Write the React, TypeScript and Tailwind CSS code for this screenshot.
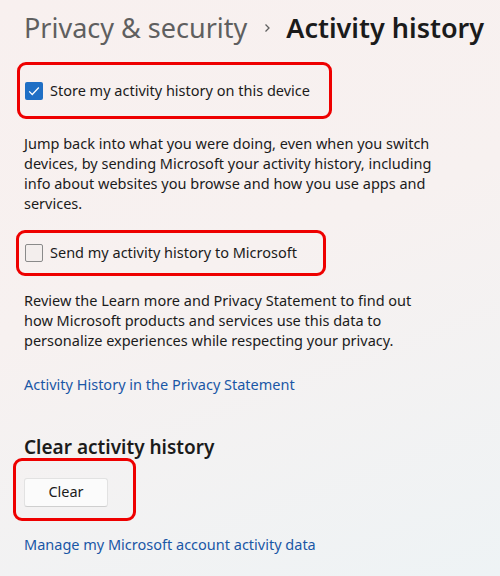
export default function App() {
  return (
    <div className="w-[500px] h-[576px] overflow-hidden bg-[linear-gradient(160deg,#f8f0ef_0%,#f7f1f0_45%,#eef3f5_100%)] font-['Noto_Sans',sans-serif] text-[#1b1b1b]">
      <div className="pl-6 pt-[8px]">
        {/* Breadcrumb header */}
        <h1 className="flex items-center whitespace-nowrap text-[27px] leading-[40px]">
          <span className="text-[#5f5f5f]">Privacy &amp; security</span>
          <svg viewBox="0 0 10 10" className="ml-[15px] mr-[14px] h-[10px] w-[10px] text-[#5f5f5f]">
            <path d="M3.5 1.5 7 5 3.5 8.5" fill="none" stroke="currentColor" strokeWidth="1.3" />
          </svg>
          <span className="font-semibold text-[#1b1b1b]">Activity history</span>
        </h1>

        {/* Store on device */}
        <div className="mt-[14px] ml-[-7px] flex h-[57px] w-[315px] items-center rounded-[9px] border-[3px] border-[#ee0000] pl-[5px]">
          <span className="flex h-[18px] w-[18px] items-center justify-center rounded-[2px] bg-[#1f6fc5]">
            <svg viewBox="0 0 16 16" className="h-[14px] w-[14px]">
              <path d="M2.5 8.5 6 12l7.5-8" fill="none" stroke="#fff" strokeWidth="1.4" />
            </svg>
          </span>
          <span className="ml-[7px] text-[14.5px]">Store my activity history on this device</span>
        </div>

        <p className="mt-[14px] w-[422px] text-[14.5px] leading-[20px]">
          Jump back into what you were doing, even when you switch devices, by sending Microsoft your activity history, including info about websites you browse and how you use apps and services.
        </p>

        {/* Send to Microsoft */}
        <div className="mt-[17px] ml-[-8px] flex h-[46px] w-[310px] items-center rounded-[9px] border-[3px] border-[#ee0000] pl-[6px]">
          <span className="h-[18px] w-[18px] rounded-[2px] border border-[#8a8a8a] bg-[#f3eeed]" />
          <span className="ml-[7px] text-[14.5px]">Send my activity history to Microsoft</span>
        </div>

        <p className="mt-[14px] w-[405px] text-[14.5px] leading-[20px]">
          Review the Learn more and Privacy Statement to find out how Microsoft products and services use this data to personalize experiences while respecting your privacy.
        </p>

        <a className="mt-[24px] block text-[14.5px] leading-[20px] text-[#1a57a6]">Activity History in the Privacy Statement</a>

        <h2 className="mt-[40px] text-[19px] font-semibold leading-[26px]">Clear activity history</h2>

        <div className="mt-[-2px] ml-[-11px] flex h-[63px] w-[123px] items-center rounded-[9px] border-[3px] border-[#ee0000] pl-[8px] pt-[5px]">
          <button className="h-[29px] w-[84px] rounded-[3px] border border-[#e2e2e2] border-b-[#cfcfcf] bg-[#fbfbfb] text-[14.5px] text-[#1b1b1b]">
            Clear
          </button>
        </div>

        <a className="mt-[13px] block text-[14.5px] leading-[20px] text-[#1a57a6]">Manage my Microsoft account activity data</a>
      </div>
    </div>
  );
}
